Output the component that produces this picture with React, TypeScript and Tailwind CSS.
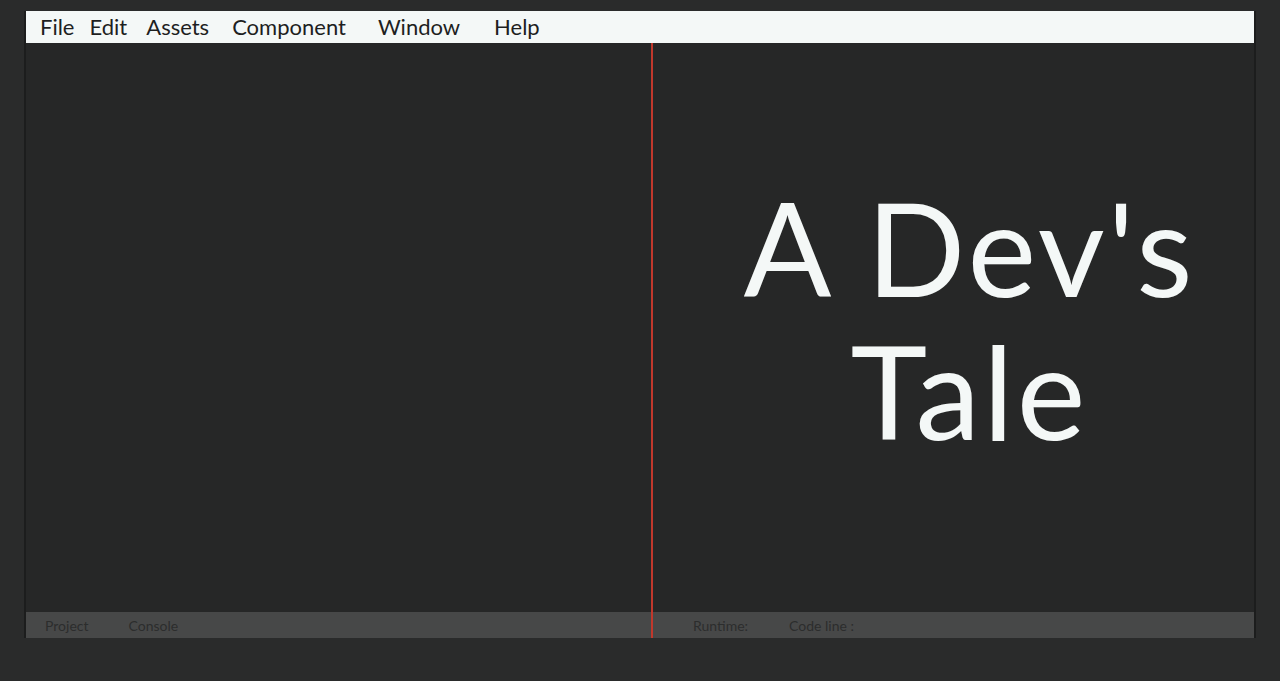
import React from "react";

const menus = [
  { label: "File", left: "pl-[14px]" },
  { label: "Edit", left: "pl-[15px]" },
  { label: "Assets", left: "pl-[19px]" },
  { label: "Component", left: "pl-[23px]" },
  { label: "Window", left: "pl-[32px]" },
  { label: "Help", left: "pl-[34px]" },
];

export default function App() {
  return (
    <div
      className="h-[681px] w-full bg-[#2a2b2b] pt-[11px] pl-[24px] pr-[24px] overflow-hidden"
      style={{ fontFamily: "Lato, 'Open Sans', sans-serif" }}
    >
      <div className="w-[1232px] flex flex-col border-l-2 border-r-2 border-[#1c1d1d]">
        {/* Menu bar */}
        <div className="h-[32px] bg-[#f4f8f7] flex items-center text-[22px] text-[#1e1f1f] leading-none">
          {menus.map((m) => (
            <span key={m.label} className={m.left}>
              {m.label}
            </span>
          ))}
        </div>

        <div className="flex h-[595px]">
          {/* Left panel */}
          <div className="w-[625px] flex flex-col">
            <div className="flex-1 bg-[#262727]" />
            <div className="h-[26px] bg-[#474848] flex items-center text-[14px] text-[#2c2d2d]">
              <span className="pl-[19px]">Project</span>
              <span className="pl-[40px]">Console</span>
            </div>
          </div>

          {/* Divider */}
          <div className="w-[2px] bg-[#c0382c]" />

          {/* Right panel */}
          <div className="flex-1 flex flex-col">
            <div className="flex-1 bg-[#262727] flex flex-col items-center justify-center pl-[32px] pb-[18px]">
              <div className="h-[143px] text-[130px] leading-[143px] tracking-[3px] text-[#f4f8f7] whitespace-nowrap">
                A Dev's
              </div>
              <div className="h-[143px] text-[130px] leading-[143px] tracking-[3px] text-[#f4f8f7] whitespace-nowrap">
                Tale
              </div>
            </div>
            <div className="h-[26px] bg-[#474848] flex items-center text-[14px] text-[#2c2d2d]">
              <span className="pl-[40px]">Runtime:</span>
              <span className="pl-[41px]">Code line :</span>
            </div>
          </div>
        </div>
      </div>
    </div>
  );
}
